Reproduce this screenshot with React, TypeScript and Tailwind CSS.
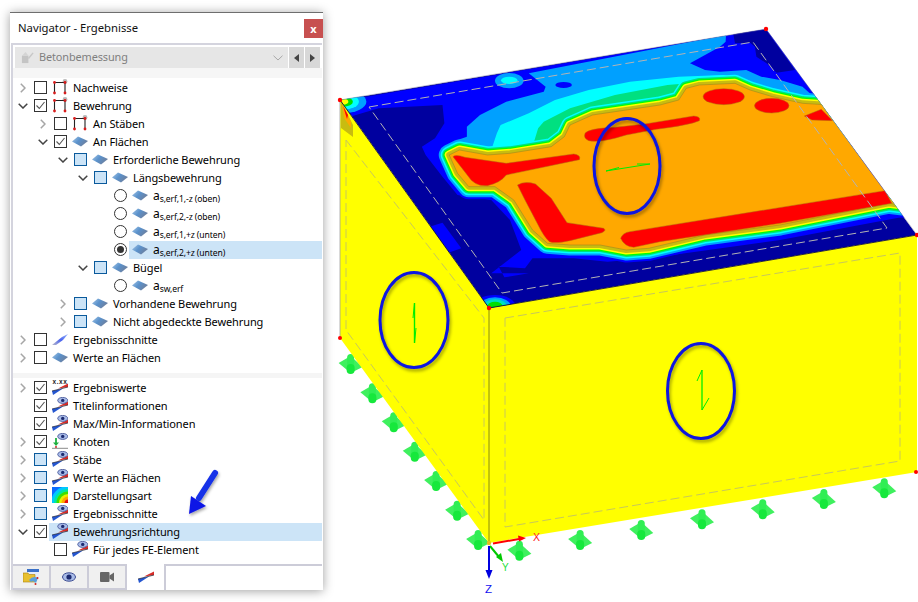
import type { ReactNode } from "react";

type Mark = "off" | "on" | "mixed" | "radio" | "radioOn";
type IconName = "frame" | "surface" | "cut" | "eye" | "xxx" | "node" | "rainbow";

function Wedge() {
  return (
    <>
      <polygon points="6,9.5 16,4.5 16,8" fill="#d82c28" />
      <polygon points="0,12 11,9.5 1,16" fill="#2456d0" />
      <line x1="0" y1="12" x2="16" y2="8" stroke="#1a1a2a" strokeWidth="0.7" />
    </>
  );
}

function Eye() {
  return (
    <>
      <ellipse cx="10.7" cy="3.4" rx="5" ry="3" fill="#a9bce8" stroke="#3a4a90" strokeWidth="0.8" />
      <circle cx="10.7" cy="3.4" r="1.7" fill="#1c2a70" />
    </>
  );
}

function TreeIcon({ name }: { name: IconName }) {
  if (name === "frame") {
    return (
      <svg viewBox="0 0 16 16" className="h-4 w-4 shrink-0 -translate-y-[1px]">
        <circle cx="13" cy="2.5" r="2.4" fill="#b9b9b9" />
        <path d="M2.5 14V3.5H13V14" fill="none" stroke="#222" strokeWidth="1.1" />
        <circle cx="2.5" cy="3.5" r="1.4" fill="#d81c1c" />
        <circle cx="13" cy="3.5" r="1.4" fill="#d81c1c" />
        <circle cx="2.5" cy="14" r="1.4" fill="#d81c1c" />
        <circle cx="13" cy="14" r="1.4" fill="#d81c1c" />
      </svg>
    );
  }
  if (name === "surface") {
    return (
      <svg viewBox="0 0 16 16" className="h-4 w-4 shrink-0">
        <defs>
          <linearGradient id="surf" x1="0" y1="0" x2="1" y2="0.5">
            <stop offset="0" stopColor="#a9c8e6" />
            <stop offset="0.5" stopColor="#5a92cc" />
            <stop offset="1" stopColor="#6d7f9e" />
          </linearGradient>
        </defs>
        <polygon points="0,7.5 6,2.5 16,7 9,12.5" fill="url(#surf)" />
      </svg>
    );
  }
  if (name === "cut") {
    return (
      <svg viewBox="0 0 16 16" className="h-4 w-4 shrink-0">
        <defs>
          <linearGradient id="cut" x1="0" y1="1" x2="1" y2="0">
            <stop offset="0" stopColor="#b8b8c8" />
            <stop offset="0.5" stopColor="#4a64f0" />
            <stop offset="1" stopColor="#9ab8f8" />
          </linearGradient>
        </defs>
        <polygon points="0,13 10,5 16,2 11,8 4,13" fill="url(#cut)" />
      </svg>
    );
  }
  if (name === "eye") {
    return (
      <svg viewBox="0 0 16 16" className="h-4 w-4 shrink-0 -translate-y-[1px]">
        <Wedge />
        <Eye />
      </svg>
    );
  }
  if (name === "xxx") {
    return (
      <svg viewBox="0 0 16 16" className="h-4 w-4 shrink-0 -translate-y-[1px]">
        <text x="0.5" y="4.8" fontSize="6.5" fontWeight="700" letterSpacing="0.6" fontFamily="Liberation Sans, sans-serif" fill="#222">
          x.xx
        </text>
        <Wedge />
      </svg>
    );
  }
  if (name === "node") {
    return (
      <svg viewBox="0 0 16 16" className="h-4 w-4 shrink-0 -translate-y-[1px]">
        <Eye />
        <path d="M4 5v6" stroke="#1fb040" strokeWidth="1.8" />
        <polygon points="1,9.5 7,9.5 4,13" fill="#1fb040" />
        <circle cx="4" cy="14" r="1" fill="#d02020" />
        <line x1="0" y1="15.3" x2="16" y2="15.3" stroke="#8a8a8a" />
      </svg>
    );
  }
  return (
    <svg viewBox="0 0 16 16" className="h-4 w-4 shrink-0 -translate-y-[1px]">
      <rect width="16" height="16" fill="#0a6cff" />
      <circle cx="16" cy="16" r="17" fill="#00c8ff" />
      <circle cx="16" cy="16" r="14" fill="#00e8a0" />
      <circle cx="16" cy="16" r="11.5" fill="#40e000" />
      <circle cx="16" cy="16" r="9" fill="#e8f000" />
      <circle cx="16" cy="16" r="6.5" fill="#ffa800" />
      <circle cx="16" cy="16" r="3.5" fill="#e81010" />
    </svg>
  );
}

function MarkBox({ mark }: { mark: Mark }) {
  if (mark === "radio" || mark === "radioOn") {
    return (
      <span className="flex h-[13px] w-[13px] shrink-0 -translate-y-[1px] items-center justify-center rounded-full border border-[#333] bg-white">
        {mark === "radioOn" && <span className="h-[7px] w-[7px] rounded-full bg-[#333]" />}
      </span>
    );
  }
  if (mark === "mixed") {
    return <span className="h-[13px] w-[13px] shrink-0 -translate-y-[1px] border border-[#0a5a9c] bg-[#cce4f7]" />;
  }
  return (
    <span className="flex h-[13px] w-[13px] shrink-0 -translate-y-[1px] items-center justify-center border border-[#333] bg-white">
      {mark === "on" && (
        <svg viewBox="0 0 11 11" className="h-[11px] w-[11px]">
          <path d="M1.5 5.5L4.3 8.5L9.5 2" fill="none" stroke="#555" strokeWidth="1.1" />
        </svg>
      )}
    </span>
  );
}

function Chevron({ open }: { open: boolean }) {
  if (open) {
    return (
      <svg viewBox="0 0 10 6" className="h-[6px] w-[10px]">
        <path d="M0.7 0.7L5 5L9.3 0.7" fill="none" stroke="#444" strokeWidth="1.5" />
      </svg>
    );
  }
  return (
    <svg viewBox="0 0 6 10" className="h-[10px] w-[6px]">
      <path d="M0.8 0.7L5 5L0.8 9.3" fill="none" stroke="#a6a6a6" strokeWidth="1.5" />
    </svg>
  );
}

const indents = ["w-0", "w-[20px]", "w-[40px]", "w-[60px]", "w-[80px]"];

function Row(props: {
  level: number;
  chevron?: "open" | "closed";
  mark: Mark;
  icon: IconName;
  selected?: boolean;
  children: ReactNode;
}) {
  return (
    <div className="flex h-[18px] items-center">
      <span className={indents[props.level] + " shrink-0"} />
      <span className="flex h-full w-[21px] shrink-0 items-center justify-center pr-[2px]">
        {props.chevron && <Chevron open={props.chevron === "open"} />}
      </span>
      <MarkBox mark={props.mark} />
      <div className={"ml-[2px] flex h-full flex-1 items-center pl-[3px] " + (props.selected ? "bg-[#cce4f7]" : "")}>
        <TreeIcon name={props.icon} />
        <span className="ml-[5px] whitespace-nowrap">{props.children}</span>
      </div>
    </div>
  );
}

function Sub({ main, sub }: { main: string; sub: string }) {
  return (
    <span className="flex items-baseline">
      <span className="text-[12px]">{main}</span>
      <span className="relative top-[2px] text-[8.6px]">{sub}</span>
    </span>
  );
}

function Tab({ children }: { children: ReactNode }) {
  return (
    <div className="flex h-full w-[38px] items-center justify-center border-y-2 border-r-2 border-[#ccccd8] bg-[#f0f0f0]">
      {children}
    </div>
  );
}

function Navigator() {
  return (
    <div className="relative mt-[12px] ml-[10px] flex h-[578px] w-[313px] shrink-0 flex-col border-t border-[#6e6e6e] bg-white shadow-[0_1px_10px_rgba(0,0,0,0.38)]">
      <div className="flex h-[30px] shrink-0 items-center justify-between pl-[8px]">
        <span className="text-[11.3px] text-[#111]">Navigator - Ergebnisse</span>
        <span className="flex h-[19px] w-[19px] items-center justify-center bg-[#c75050] text-[11px] leading-none font-bold text-white">
          x
        </span>
      </div>
      <div className="mx-[1px] flex flex-1 flex-col border-t-2 border-l-2 border-[#d4d4de] pt-[2px] text-[11px] tracking-[-0.1px] text-black">
        <div className="flex h-[21px] shrink-0 gap-[1px] px-[2px]">
          <div className="flex flex-1 items-center bg-[#e6e6e6] pr-[4px] pl-[6px] text-[10.9px] text-[#7f7f7f]">
            <svg viewBox="0 0 14 14" className="mr-[5px] h-[13px] w-[13px]">
              <polygon points="1,5 8,5 8,13 1,13" fill="#c4c4c4" />
              <polygon points="1,5 5,1 8,5" fill="#d4d4d4" />
              <path d="M8 8L13 2" stroke="#c8c8c8" strokeWidth="1.6" />
            </svg>
            <span className="flex-1">Betonbemessung</span>
            <svg viewBox="0 0 10 6" className="mr-[1px] h-[6px] w-[10px]">
              <path d="M0.5 0.7L5 5L9.5 0.7" fill="none" stroke="#a8a8a8" strokeWidth="1" />
            </svg>
          </div>
          <div className="flex w-[15px] items-center justify-center bg-[#d8d8d8]">
            <svg viewBox="0 0 5 8" className="h-[8px] w-[5px]">
              <polygon points="5,0 0,4 5,8" fill="#444" />
            </svg>
          </div>
          <div className="flex w-[15px] items-center justify-center bg-[#d8d8d8]">
            <svg viewBox="0 0 5 8" className="h-[8px] w-[5px]">
              <polygon points="0,0 5,4 0,8" fill="#444" />
            </svg>
          </div>
        </div>
        <div className="h-[10px] shrink-0 bg-[#f6f6f6]" />
        <div className="shrink-0 pt-[1px]">
          <Row level={0} chevron="closed" mark="off" icon="frame">Nachweise</Row>
          <Row level={0} chevron="open" mark="on" icon="frame">Bewehrung</Row>
          <Row level={1} chevron="closed" mark="off" icon="frame">An Stäben</Row>
          <Row level={1} chevron="open" mark="on" icon="surface">An Flächen</Row>
          <Row level={2} chevron="open" mark="mixed" icon="surface">Erforderliche Bewehrung</Row>
          <Row level={3} chevron="open" mark="mixed" icon="surface">Längsbewehrung</Row>
          <Row level={4} mark="radio" icon="surface"><Sub main="a" sub="s,erf,1,-z (oben)" /></Row>
          <Row level={4} mark="radio" icon="surface"><Sub main="a" sub="s,erf,2,-z (oben)" /></Row>
          <Row level={4} mark="radio" icon="surface"><Sub main="a" sub="s,erf,1,+z (unten)" /></Row>
          <Row level={4} mark="radioOn" icon="surface" selected><Sub main="a" sub="s,erf,2,+z (unten)" /></Row>
          <Row level={3} chevron="open" mark="mixed" icon="surface">Bügel</Row>
          <Row level={4} mark="radio" icon="surface"><Sub main="a" sub="sw,erf" /></Row>
          <Row level={2} chevron="closed" mark="mixed" icon="surface">Vorhandene Bewehrung</Row>
          <Row level={2} chevron="closed" mark="mixed" icon="surface">Nicht abgedeckte Bewehrung</Row>
          <Row level={0} chevron="closed" mark="off" icon="cut">Ergebnisschnitte</Row>
          <Row level={0} chevron="closed" mark="off" icon="surface">Werte an Flächen</Row>
        </div>
        <div className="mt-[6px] h-[5px] shrink-0 bg-[#f5f5f5]" />
        <div className="shrink-0 pt-[1px]">
          <Row level={0} chevron="closed" mark="on" icon="xxx">Ergebniswerte</Row>
          <Row level={0} mark="on" icon="eye">Titelinformationen</Row>
          <Row level={0} mark="on" icon="eye">Max/Min-Informationen</Row>
          <Row level={0} chevron="closed" mark="on" icon="node">Knoten</Row>
          <Row level={0} chevron="closed" mark="mixed" icon="eye">Stäbe</Row>
          <Row level={0} chevron="closed" mark="mixed" icon="eye">Werte an Flächen</Row>
          <Row level={0} chevron="closed" mark="mixed" icon="rainbow">Darstellungsart</Row>
          <Row level={0} chevron="closed" mark="mixed" icon="eye">Ergebnisschnitte</Row>
          <Row level={0} chevron="open" mark="on" icon="eye" selected>Bewehrungsrichtung</Row>
          <Row level={1} mark="off" icon="eye">Für jedes FE-Element</Row>
        </div>
        <div className="flex-1" />
        <div className="flex h-[26px] shrink-0">
          <Tab>
            <svg viewBox="0 0 16 16" className="h-4 w-4">
              <rect x="4" y="0" width="12" height="3" fill="#3a70c8" />
              <rect x="4" y="3" width="12" height="5" fill="#e4ecf8" />
              <path d="M0 4H5L6 5.5H12V13H0Z" fill="#e8c030" stroke="#a88010" strokeWidth="0.6" />
              <path d="M6 11Q10 6 15 9L13 14Q10 11 8 13Z" fill="#5aa0dc" />
              <circle cx="14.5" cy="9" r="1" fill="#d02020" />
              <circle cx="12.5" cy="15" r="1" fill="#d02020" />
            </svg>
          </Tab>
          <Tab>
            <svg viewBox="0 0 14 10" className="h-[10px] w-[14px]">
              <ellipse cx="7" cy="5" rx="6.5" ry="4.2" fill="#a9bce8" stroke="#3a4a90" />
              <circle cx="7" cy="5" r="2.6" fill="#1c2a70" />
            </svg>
          </Tab>
          <Tab>
            <svg viewBox="0 0 14 10" className="h-[10px] w-[14px]">
              <rect x="0" y="0" width="9.5" height="10" rx="1" fill="#666" />
              <polygon points="9.5,3.5 14,0.5 14,9.5 9.5,6.5" fill="#666" />
            </svg>
          </Tab>
          <div className="flex h-full w-[39px] items-center justify-center border-r-2 border-[#ccccd8] bg-white">
            <svg viewBox="0 4 16 12" className="h-3 w-4">
              <Wedge />
            </svg>
          </div>
          <div className="flex-1 border-t-2 border-[#ccccd8] bg-white" />
        </div>
      </div>
      <svg viewBox="175 465 60 60" className="absolute top-[452px] left-[165px] h-[60px] w-[60px]">
        <defs>
          <filter id="arrowShadow" x="-30%" y="-30%" width="160%" height="160%">
            <feDropShadow dx="1" dy="2" stdDeviation="1.5" floodColor="#000" floodOpacity="0.35" />
          </filter>
        </defs>
        <g filter="url(#arrowShadow)">
          <path d="M215 473L199 498" stroke="#1530e8" strokeWidth="6" strokeLinecap="round" />
          <polygon points="189,514 191,496 206,506" fill="#0a14e6" />
        </g>
      </svg>
    </div>
  );
}

const leftSupports = [[55, 192], [113, 280], [170, 367], [226, 455], [283, 543], [339, 632], [395, 720]];
const rightSupports = [[505, 752], [667, 720], [830, 690], [992, 658], [1154, 628], [1317, 597], [1478, 565]];

// orange area outline, drawn with stacked strokes to give the contour bands
const orange =
  "M318,345 L345,330 L420,345 L480,340 L590,320 L625,290 L640,255 L700,225 L880,195 L930,180 L950,145 L985,135 L1080,130 L1120,150 L1180,170 L1260,190 L1330,195 L1560,500 L1490,490 L1200,555 L1000,585 L850,625 L790,630 L720,615 L640,615 L580,610 L540,570 L490,480 L440,440 L370,440 L340,400 Z";

const bands: [string, number][] = [
  ["#0000ff", 25],
  ["#00a0ff", 21],
];
const innerBands: [string, number][] = [
  ["#00ffff", 17],
  ["#00e080", 14],
  ["#00ff00", 11.5],
  ["#ffff00", 9],
  ["#c8bc10", 6],
];

function Model() {
  return (
    <svg viewBox="323 0 595 602" className="h-[602px] w-[595px] shrink-0" fontFamily="Liberation Sans, sans-serif">
      <defs>
        <clipPath id="topFace">
          <polygon points="27,180 1163,-33 1565,585 424,804" />
        </clipPath>
        <filter id="ringShadow" x="-20%" y="-20%" width="140%" height="140%">
          <feDropShadow dx="1.5" dy="2.5" stdDeviation="1.5" floodColor="#000" floodOpacity="0.35" />
        </filter>
        <symbol id="support" viewBox="-14 -12 28 24" overflow="visible">
          <polygon points="-12,-1 0,-8 12,3 0,9" fill="#3ff05e" />
          <rect x="-3.5" y="-10" width="7" height="19" rx="3.5" fill="#30ee54" />
          <rect x="-4" y="0" width="8" height="10" rx="4" fill="#16e83c" />
        </symbol>
      </defs>

      {leftSupports.concat(rightSupports).map(([x, y]) => (
        <use key={x} href="#support" x={330 + x * 0.375 - 14} y={300 + y / 3 - 12} width="28" height="24" />
      ))}

      <polygon points="340,100 489,308 489,543 340,338" fill="#ffff00" />
      <polygon points="489,308 917,235 917,472 489,543" fill="#ffff00" />
      <line x1="340" y1="100" x2="340" y2="338" stroke="#a0a0a0" strokeWidth="0.8" />
      <line x1="489" y1="308" x2="489" y2="543" stroke="#8a8a10" strokeWidth="1" />
      <polygon points="341,101 353,125 353,137 341,128" fill="#c8bc10" />
      <polygon points="342,104 351,122 351,128 344,118" fill="#ffa800" />
      <polygon points="343,106 348,115 347,119" fill="#ff0000" />

      <g transform="translate(330 40) scale(0.375 0.3333)">
        <g clipPath="url(#topFace)">
          <polygon points="27,180 1163,-33 1565,585 424,804" fill="#00009f" />
          <polygon
            points="30,183 1163,-33 1320,180 1530,530 1200,600 850,655 740,665 650,655 540,655 520,685 450,680 465,712 530,700 430,700 510,630 480,540 430,480 340,465 300,410 255,345 245,320 280,295 305,250 300,195 130,205 60,228"
            fill="#0000ff"
          />
          <polygon points="1075,-20 1162,-32 1240,90 1191,98 1164,70 1137,50 1133,20 1120,8 1080,10" fill="#00009f" />
          <polygon points="265,560 300,548 350,625 312,640" fill="#0000ff" />
          {bands.map(([c, w]) => (
            <path key={c} d={orange} fill="none" stroke={c} strokeWidth={w} strokeLinejoin="round" vectorEffect="non-scaling-stroke" />
          ))}
          <polygon
            points="530,100 1056,-15 1055,5 1040,20 960,70 1000,90 1040,95 1110,90 1150,110 1200,120 1260,140 1305,185 1300,260 800,300 400,340 340,300 365,290 365,260 400,225 470,185 570,155 575,140"
            fill="#00a0ff"
          />
          <ellipse cx="478" cy="122" rx="38" ry="23" fill="#00a0ff" />
          <ellipse cx="478" cy="121" rx="22" ry="11" fill="#00ffff" />
          <ellipse cx="623" cy="135" rx="22" ry="9" fill="#0000ff" />
          <polygon
            points="430,330 445,280 455,255 530,220 600,180 690,150 800,125 930,110 1050,105 1110,125 1000,170 700,260 500,340"
            fill="#00ffff"
          />
          <polygon points="540,320 555,265 570,245 640,205 760,165 900,135 1000,125 1020,160 800,240 600,300" fill="#00e080" />
          {innerBands.map(([c, w]) => (
            <path key={c} d={orange} fill="none" stroke={c} strokeWidth={w} strokeLinejoin="round" vectorEffect="non-scaling-stroke" />
          ))}
          <path d={orange} fill="#ffa800" stroke="#9c8a20" strokeWidth="0.6" vectorEffect="non-scaling-stroke" />
          <g fill="#ff0000" stroke="#b07010" strokeWidth="0.5">
            <path vectorEffect="non-scaling-stroke" d="M680,280 Q690,265 760,262 L840,252 L970,228 Q990,230 985,242 Q960,255 870,268 L790,285 Q720,310 690,302 Q675,295 680,280 Z" />
            <path vectorEffect="non-scaling-stroke" d="M328,350 Q335,342 360,352 L470,370 L650,342 Q670,345 665,359 L470,405 Q455,428 420,437 Q385,440 368,408 Z" />
            <path vectorEffect="non-scaling-stroke" d="M500,435 Q520,422 548,432 L590,475 L632,548 L730,565 Q738,572 725,578 L640,602 Q600,612 585,605 Q570,590 555,555 L520,480 Z" />
            <path vectorEffect="non-scaling-stroke" d="M775,595 Q780,578 800,575 L1480,452 L1498,490 L1200,550 L880,605 L810,622 Q785,620 775,595 Z" />
            <ellipse vectorEffect="non-scaling-stroke" cx="1050" cy="170" rx="55" ry="24" />
            <ellipse vectorEffect="non-scaling-stroke" cx="1178" cy="197" rx="46" ry="22" />
            <path vectorEffect="non-scaling-stroke" d="M1265,228 L1310,208 L1340,242 L1285,240 Z" />
          </g>
          <ellipse cx="440" cy="800" rx="55" ry="35" fill="#0000ff" />
          <ellipse cx="440" cy="800" rx="42" ry="28" fill="#00a0ff" />
          <ellipse cx="440" cy="800" rx="32" ry="22" fill="#00e0c0" />
          <ellipse cx="440" cy="800" rx="20" ry="15" fill="#00e000" />
          <ellipse cx="35" cy="185" rx="62" ry="34" fill="#00a0ff" />
          <ellipse cx="35" cy="185" rx="42" ry="24" fill="#00ffff" />
          <ellipse cx="35" cy="185" rx="26" ry="15" fill="#00e000" />
          <ellipse cx="35" cy="185" rx="14" ry="9" fill="#ffff00" />
        </g>
      </g>

      <g fill="none" stroke="#b4b4b4" strokeWidth="1" strokeDasharray="9 4">
        <polygon points="369,107 753,42 887,228 502,293" />
      </g>
      <g fill="none" stroke="#c8c85a" strokeWidth="1" strokeDasharray="9 4">
        <polygon points="505,318 900,253 900,461 505,527" />
        <polygon points="346,140 484,318 484,520 346,330" />
      </g>

      <path d="M340 100L489 308L917 235" fill="none" stroke="#151530" strokeWidth="0.9" />
      <path d="M340 100L766 29L917 235" fill="none" stroke="#8080a0" strokeWidth="0.5" />

      <g fill="none" stroke="#00ee00" strokeWidth="1">
        <path d="M606 171L650 164L637 164" />
        <path d="M606 171L619 167.5" />
        <path d="M414.5 303V343" strokeWidth="1.4" />
        <path d="M414.5 303L413 318M414.5 343L416 328" />
        <path d="M702 370V410" strokeWidth="1.3" />
        <path d="M702 370L697 381M702 410L709 398" />
      </g>

      <g fill="none" stroke="#0c14e0" strokeWidth="3" filter="url(#ringShadow)">
        <ellipse cx="627" cy="166" rx="33" ry="47.5" />
        <ellipse cx="414" cy="320" rx="34" ry="47.5" />
        <ellipse cx="701" cy="391" rx="33.5" ry="47.5" />
      </g>

      <g fill="#ff0000">
        <circle cx="340" cy="100" r="2.2" />
        <circle cx="766" cy="29" r="2.2" />
        <circle cx="917" cy="235" r="2.2" />
        <circle cx="489" cy="308" r="2.2" />
        <circle cx="340" cy="338" r="2" />
        <circle cx="916" cy="472" r="2" />
      </g>

      <path d="M493 543.5L519 539" stroke="#ff0000" strokeWidth="2" />
      <polygon points="526,538 518,535.5 519,541.5" fill="#ff0000" />
      <path d="M490 546L499 557" stroke="#00c800" strokeWidth="2" />
      <polygon points="503,562 496,557 501,553" fill="#00c800" />
      <path d="M489 546V572" stroke="#0000e0" strokeWidth="2" />
      <polygon points="489,579 485.5,570 492.5,570" fill="#0000e0" />
      <circle cx="489" cy="543" r="2.2" fill="#e8c020" />
      <text x="533" y="540.5" fontSize="10.5" fill="#ff2020">X</text>
      <text x="502" y="571" fontSize="10" fill="#20e040">Y</text>
      <text x="485" y="593" fontSize="11.5" fill="#1010f0">Z</text>
    </svg>
  );
}

export default function App() {
  return (
    <div className="flex h-[602px] w-[918px] overflow-hidden bg-white font-['Noto_Sans','Open_Sans',sans-serif]">
      <Navigator />
      <Model />
    </div>
  );
}
